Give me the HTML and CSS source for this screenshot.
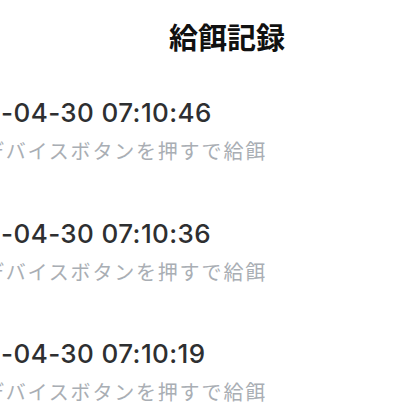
FILE: index.html
```html
<!DOCTYPE html>
<html lang="ja">
<head>
<meta charset="utf-8">
<link rel="stylesheet" href="styles.css">
</head>
<body>
<div class="screen">
  <header class="title-bar">
    <h1 class="title">給餌記録</h1>
  </header>
  <ul class="records">
    <li class="record">
      <div class="record-time">2024-04-30 07:10:46</div>
      <div class="record-desc">デバイスボタンを押すで給餌</div>
    </li>
    <li class="record">
      <div class="record-time">2024-04-30 07:10:36</div>
      <div class="record-desc">デバイスボタンを押すで給餌</div>
    </li>
    <li class="record">
      <div class="record-time">2024-04-30 07:10:19</div>
      <div class="record-desc">デバイスボタンを押すで給餌</div>
    </li>
  </ul>
</div>
</body>
</html>
```

FILE: styles.css
```css
html, body {
  margin: 0;
  padding: 0;
  background: #ffffff;
}

.screen {
  width: 404px;
  height: 404px;
  overflow: hidden;
  font-family: Inter, "Noto Sans CJK JP", sans-serif;
}

.title-bar {
  padding: 16px 0 0 50px;
  height: 60px;
  box-sizing: border-box;
}

.title {
  margin: 0;
  text-align: center;
  font-family: "Noto Sans CJK JP", sans-serif;
  font-size: 29px;
  line-height: 40px;
  font-weight: 700;
  color: #111111;
}

.records {
  list-style: none;
  margin: 0;
  padding: 37px 0 0 0;
}

.record {
  height: 120.5px;
}

.record-time {
  margin-left: -66px;
  font-family: Inter, sans-serif;
  font-size: 26px;
  line-height: 32px;
  letter-spacing: 0.4px;
  font-weight: 450;
  color: #2e2f31;
  white-space: nowrap;
}

.record-desc {
  margin-left: -16px;
  margin-top: 9px;
  font-family: "Noto Sans CJK JP", sans-serif;
  font-size: 20px;
  line-height: 26px;
  letter-spacing: 1.8px;
  color: #a9aeb4;
  white-space: nowrap;
}
```
